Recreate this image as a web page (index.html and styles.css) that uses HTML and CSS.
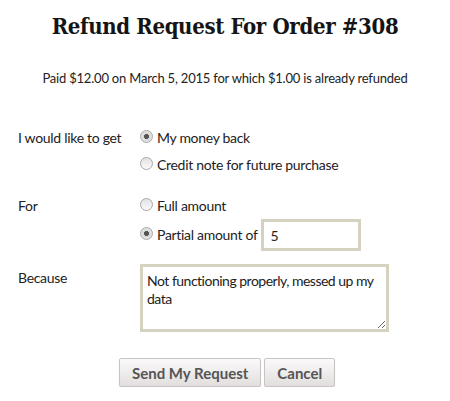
FILE: index.html
```html
<!DOCTYPE html>
<html>
<head>
<meta charset="utf-8">
<link rel="stylesheet" href="styles.css">
</head>
<body>
<div class="page">
  <h1 class="title">Refund Request For Order #308</h1>
  <p class="paid">Paid $12.00 on March 5, 2015 for which $1.00 is already refunded</p>
  <form class="form">
    <div class="row">
      <div class="label">I would like to get</div>
      <div class="controls">
        <label class="opt"><input type="radio" name="get" checked><span>My money back</span></label>
        <label class="opt"><input type="radio" name="get"><span>Credit note for future purchase</span></label>
      </div>
    </div>
    <div class="row row-for">
      <div class="label">For</div>
      <div class="controls">
        <label class="opt"><input type="radio" name="amt"><span>Full amount</span></label>
        <label class="opt opt-partial"><input type="radio" name="amt" checked><span>Partial amount of</span><input class="amount" type="text" value="5"></label>
      </div>
    </div>
    <div class="row row-because">
      <div class="label label-because">Because</div>
      <div class="controls">
        <textarea class="reason">Not functioning properly, messed up my data</textarea>
      </div>
    </div>
    <div class="actions">
      <button type="button" class="btn">Send My Request</button>
      <button type="button" class="btn">Cancel</button>
    </div>
  </form>
</div>
</body>
</html>
```
FILE: styles.css
```css
html, body { margin: 0; padding: 0; background: #fff; }
body {
  font-family: "Lato", "Liberation Sans", sans-serif;
  font-size: 14px;
  letter-spacing: -0.3px;
  color: #222;
}
.page { padding: 0 0 0 18px; width: 432px; }
.title {
  margin: 0 0 0 -18px;
  padding-top: 11px;
  text-align: center;
  font-family: "DejaVu Serif Condensed", "DejaVu Serif", serif;
  font-stretch: condensed;
  font-weight: bold;
  font-size: 22px;
  letter-spacing: -0.35px;
  line-height: 30px;
  color: #151515;
}
.paid {
  margin: 28px 0 0 -18px;
  text-align: center;
  line-height: 18px;
  font-size: 13px;
  letter-spacing: -0.2px;
}
.form { margin-top: 42px; }
.row { display: flex; margin-bottom: 23px; }
.row-for { margin-bottom: 13px; }
.row-because { margin-bottom: 26px; }
.label { width: 122px; line-height: 18px; }
.label-because { padding-top: 5px; }
.controls { display: flex; flex-direction: column; gap: 9px; }
.opt { display: flex; align-items: center; line-height: 18px; }
.opt input[type=radio] {
  appearance: none;
  -webkit-appearance: none;
  width: 13px; height: 13px;
  margin: 0 4px 0 0;
  border-radius: 50%;
  border: 1px solid #a8a8a8;
  background: linear-gradient(#e2e2e2, #fafafa);
  box-sizing: border-box;
  position: relative;
  top: -2px;
}
.opt input[type=radio]:checked {
  background: radial-gradient(circle, #555 0 2.2px, #d8d8d8 2.8px, #eeeeee 100%);
}
.opt-partial { margin-top: -5px; }
.amount {
  width: 100px; height: 32px;
  box-sizing: border-box;
  border: 3px solid #d6d2c0;
  margin-left: 3px;
  padding: 0 7px;
  font: inherit;
  color: #222;
  outline: none;
}
.reason {
  width: 249px; height: 68px;
  box-sizing: border-box;
  border: 3px solid #d6d2c0;
  padding: 5px 0 5px 4px;
  margin: 0;
  font: inherit;
  letter-spacing: -0.5px;
  line-height: 18px;
  color: #222;
  resize: both;
  outline: none;
  display: block;
}
.actions { display: flex; gap: 3px; padding-left: 101px; }
.btn {
  font-family: "Lato", "Liberation Sans", sans-serif;
  font-weight: bold;
  font-size: 15px;
  letter-spacing: 0;
  color: #555;
  height: 29px;
  padding: 0 12px;
  border: 1px solid #c8c4c4;
  border-radius: 2px;
  background: linear-gradient(#fbfafa, #e2dede);
  box-shadow: 0 1px 1px rgba(0,0,0,0.15);
}
```
